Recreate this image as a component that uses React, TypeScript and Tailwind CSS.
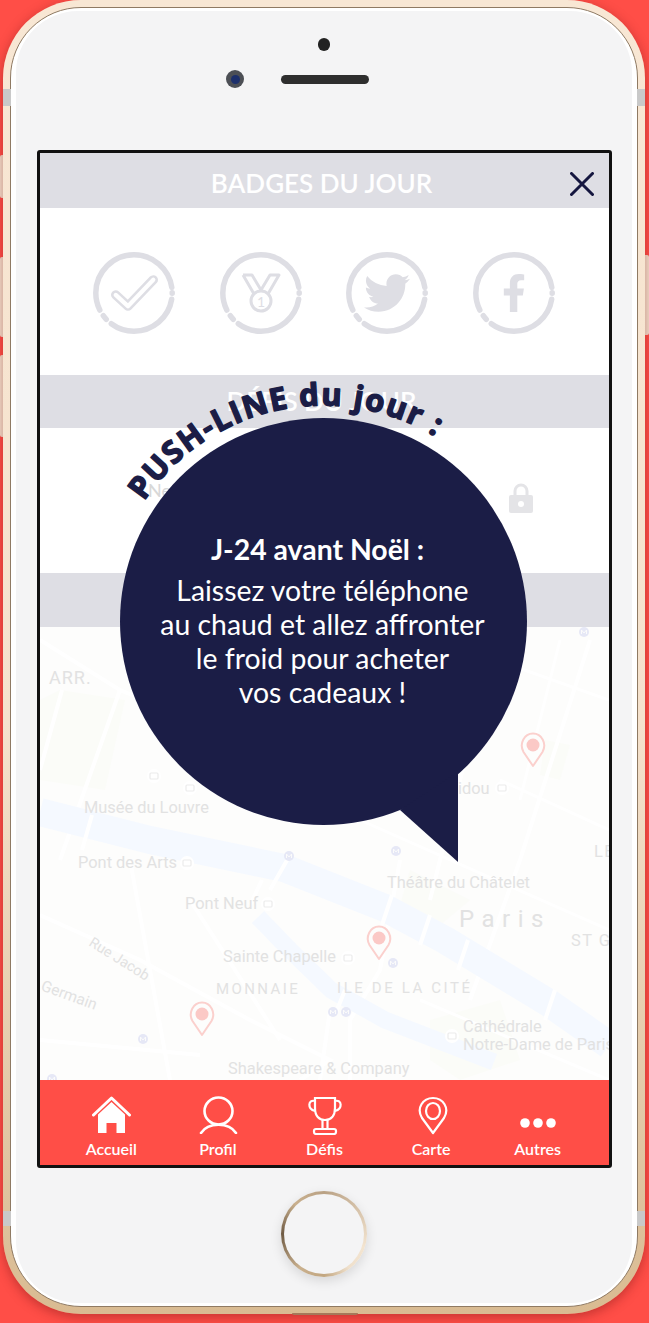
import { FaTwitter, FaFacebookF } from "react-icons/fa";

const lato = "font-['Lato',sans-serif]";

function Ring({ children }: { children: React.ReactNode }) {
  return (
    <div className="relative flex h-[82px] w-[82px] items-center justify-center">
      <svg viewBox="0 0 82 82" className="absolute inset-0 h-full w-full">
        <circle cx="41" cy="41" r="38.2" fill="none" stroke="#dedee4" strokeWidth="5.5" strokeLinecap="round" pathLength={360} strokeDasharray="1 9 117 10 7 10 198 8" strokeDashoffset="0.5" />
      </svg>
      {children}
    </div>
  );
}

function Band({ label }: { label: string }) {
  return (
    <div className={`flex h-full items-center justify-center bg-[#dedee4] pr-[6px] text-[26px] font-semibold text-white ${lato}`}>{label}</div>
  );
}

function Pin({ x, y }: { x: number; y: number }) {
  return (
    <g transform={`translate(${x} ${y})`}>
      <path d="M13 34 L3.5 20 C-1 12 4 1.5 13 1.5 C22 1.5 27 12 22.5 20 Z" fill="#fdfdfc" stroke="#fbd0cd" strokeWidth="2" strokeLinejoin="round" />
      <circle cx="13" cy="13" r="6.5" fill="#fbc9c6" />
    </g>
  );
}

function Metro({ x, y }: { x: number; y: number }) {
  return (
    <g>
      <circle cx={x} cy={y} r="5" fill="#e6e8f6" />
      <path d={`M${x - 2.5} ${y + 2} V${y - 2} L${x} ${y + 1} L${x + 2.5} ${y - 2} V${y + 2}`} fill="none" stroke="#fbfbfb" strokeWidth="1" />
    </g>
  );
}

function Spot({ x, y }: { x: number; y: number }) {
  return (
    <g>
      <circle cx={x} cy={y} r="7" fill="#ffffff" />
      <rect x={x - 4} y={y - 3} width="8" height="6" rx="1" fill="none" stroke="#ececec" strokeWidth="1.2" />
    </g>
  );
}

function MapArt() {
  const t = { fontFamily: "Roboto, sans-serif", fill: "#e2e2e2" } as const;
  return (
    <svg viewBox="40 627 569 453" className="block h-full w-full bg-[#fdfdfc]">
      <g fill="#fbfcf8">
        <path d="M60 690 L125 700 L105 790 L40 780 L40 700 Z" />
        <path d="M410 870 L470 900 L440 925 L400 905 Z" />
        <path d="M430 1020 L500 1000 L520 1060 L460 1080 L430 1060 Z" />
        <path d="M545 740 L570 745 L560 780 L540 775 Z" />
      </g>
      <g fill="none" stroke="#ffffff" strokeWidth="4">
        <path d="M40 640 L120 690 L60 860 M62 690 L40 770 M120 690 L290 760 M500 627 L480 700 L430 900 M590 640 L520 860 L470 1000" />
        <path d="M40 915 L140 960 L250 1020 L330 1060 L300 1080 M130 860 L170 1080 M190 900 L280 1040 M40 1040 L200 1055 M330 1010 L320 1080 M400 860 L380 970 L350 1020 L350 1080" />
        <path d="M440 640 L609 700 M500 780 L609 830 M560 640 L520 800 M360 820 L609 930 M420 1000 L609 1080" strokeWidth="3" />
      </g>
      <g fill="none" stroke="#f5f9ff" strokeLinejoin="round">
        <path d="M40 812 L150 840 L284 868 L385 908 L445 940 L549 1003 L609 1045" strokeWidth="28" />
        <path d="M258 917 L290 950 L331 990 L385 1020 L494 1062" strokeWidth="17" />
      </g>
      <g fill="none" stroke="#ffffff" strokeWidth="4">
        <path d="M92 815 L82 850 M290 855 L270 890 M392 895 L382 925 M430 915 L420 945 M468 940 L458 970 M555 990 L545 1020 M345 990 L335 1015 M262 880 L250 905" />
      </g>
      <Metro x={584} y={632} />
      <Metro x={289} y={856} />
      <Metro x={396} y={851} />
      <Metro x={393} y={963} />
      <Metro x={333} y={1012} />
      <Metro x={346} y={1012} />
      <Metro x={143} y={1039} />
      <Metro x={52} y={1079} />
      <Spot x={187} y={863} />
      <Spot x={268} y={904} />
      <Spot x={502} y={788} />
      <Spot x={348} y={958} />
      <Spot x={154} y={776} />
      <Spot x={190} y={788} />
      <Spot x={452} y={1036} />
      <g {...t} fontSize="16.4">
        <text x="49" y="684" fontSize="18" letterSpacing="1">ARR.</text>
        <text x="84" y="813">Musée du Louvre</text>
        <text x="78" y="868">Pont des Arts</text>
        <text x="387" y="888">Théâtre du Châtelet</text>
        <text x="185" y="909">Pont Neuf</text>
        <text x="458" y="794">idou</text>
        <text x="459" y="927" fontSize="24" letterSpacing="7.5">Paris</text>
        <text x="571" y="946" letterSpacing="1.5">ST G</text>
        <text x="594" y="857" letterSpacing="1.5">LE</text>
        <text x="223" y="962">Sainte Chapelle</text>
        <text x="216" y="994" fontSize="15" letterSpacing="2.4">MONNAIE</text>
        <text x="337" y="993" fontSize="15" letterSpacing="2.6">ILE DE LA CITÉ</text>
        <text x="88" y="945" fontSize="14.5" transform="rotate(32 88 945)">Rue Jacob</text>
        <text x="40" y="990" fontSize="15.5" transform="rotate(20 40 990)">Germain</text>
        <text x="463" y="1032">Cathédrale</text>
        <text x="463" y="1050">Notre-Dame de Paris</text>
        <text x="228" y="1074">Shakespeare &amp; Company</text>
      </g>
      <Pin x={520} y={732} />
      <Pin x={366} y={925} />
      <Pin x={189} y={1001} />
    </svg>
  );
}

function NavItem({ label, children }: { label: string; children: React.ReactNode }) {
  return (
    <div className="flex flex-col items-center pt-[15px]">
      <div className="flex h-[40px] items-center justify-center">{children}</div>
      <div className={`mt-[4px] text-[16px] font-semibold leading-[20px] text-white ${lato}`}>{label}</div>
    </div>
  );
}

export default function App() {
  return (
    <div className="relative h-[1323px] w-[649px] overflow-hidden bg-[#ff4e47]">
      <div className="absolute left-0 top-[155px] h-[43px] w-[6px] rounded-l-[2px] bg-[#f6e3d0]" />
      <div className="absolute left-0 top-[257px] h-[80px] w-[6px] rounded-l-[2px] bg-[#f6e3d0]" />
      <div className="absolute left-0 top-[355px] h-[82px] w-[6px] rounded-l-[2px] bg-[#f6e3d0]" />
      <div className="absolute right-0 top-[255px] h-[80px] w-[6px] rounded-r-[2px] bg-[#f6e3d0]" />

      <div className="relative ml-[3px] h-[1314px] w-[642px] rounded-[78px] bg-[linear-gradient(180deg,#f8e7d4_0%,#f5e2cd_55%,#d9bb92_100%)] px-[7px] py-[7px] shadow-[0_3px_12px_rgba(120,20,20,0.45)]">
        <div className="absolute left-0 top-[89px] h-[17px] w-[8px] bg-[#c9c9c9]" />
        <div className="absolute right-0 top-[89px] h-[17px] w-[8px] bg-[#c9c9c9]" />
        <div className="absolute left-0 top-[1211px] h-[15px] w-[8px] bg-[#c9c9c9]" />
        <div className="absolute right-0 top-[1211px] h-[15px] w-[8px] bg-[#c9c9c9]" />
        <div className="h-full rounded-[71px] border border-[#8f7a63] bg-white px-[5px] pb-[3px] pt-[3px]">
          <div className="flex h-full flex-col items-start rounded-[62px] bg-[#f4f4f5]">
            <div className="ml-[302px] mt-[27px] h-[13px] w-[12px] rounded-full bg-[#222222]" />
            <div className="ml-[210px] mt-[19px] flex h-[18px] items-center">
              <div className="flex h-[18px] w-[18px] items-center justify-center rounded-full bg-[#4c4f55]">
                <div className="h-[9px] w-[9px] rounded-full bg-[#1c2f6b]" />
              </div>
              <div className="ml-[37px] h-[9px] w-[88px] rounded-full bg-[#2e2e2e]" />
            </div>

            <div className="relative ml-[21px] mt-[62px] h-[1018px] w-[575px] rounded-[3px] border-[3px] border-[#111111] bg-white">
              <div className="relative h-[55px]">
                <div className={`flex h-full items-center justify-center bg-[#dedee4] pr-[6px] pt-[6px] text-[26px] font-semibold text-white ${lato}`}>BADGES DU JOUR</div>
                <svg viewBox="0 0 24 24" className="absolute right-[15px] top-[19px] h-[24px] w-[24px]">
                  <path d="M1.5 1.5 L22.5 22.5 M22.5 1.5 L1.5 22.5" stroke="#15163f" strokeWidth="3" strokeLinecap="round" />
                </svg>
              </div>

              <div className="flex h-[167px] items-center gap-[44.7px] pl-[53px] pt-[2px]">
                <Ring>
                  <svg viewBox="0 0 50 40" className="h-[38px] w-[47px]">
                    <path d="M5 22 L18 34 L45 6" fill="none" stroke="#dedee4" strokeWidth="10" strokeLinecap="round" strokeLinejoin="round" />
                    <path d="M5 22 L18 34 L45 6" fill="none" stroke="#ffffff" strokeWidth="4.5" strokeLinecap="round" strokeLinejoin="round" />
                  </svg>
                </Ring>
                <Ring>
                  <svg viewBox="0 0 40 40" className="h-[40px] w-[40px]">
                    <path d="M2 2 H11 L20 17 L29 2 H38 L27 21 M2 2 L13 21" fill="none" stroke="#dedee4" strokeWidth="3" strokeLinejoin="round" />
                    <circle cx="20" cy="28" r="10" fill="#ffffff" stroke="#dedee4" strokeWidth="3" />
                    <text x="20" y="33.5" textAnchor="middle" fontSize="14" fontFamily="Lato, sans-serif" fill="#dedee4">1</text>
                  </svg>
                </Ring>
                <Ring>
                  <FaTwitter className="h-[46px] w-[46px] text-[#dedee4]" />
                </Ring>
                <Ring>
                  <FaFacebookF className="h-[38px] w-[38px] text-[#dedee4]" />
                </Ring>
              </div>

              <div className="h-[53px]"><Band label="DÉFIS DU JOUR" /></div>

              <div className={`flex h-[145px] items-center justify-between pl-[108px] pr-[76px] text-[18px] text-[#d8d8d8] ${lato}`}>
                <span className="mb-[20px]">Ne pas utiliser</span>
                <svg viewBox="0 0 24 30" className="mb-[6px] h-[30px] w-[24px]">
                  <path d="M6 13 V8 a6 6 0 0 1 12 0 V13" fill="none" stroke="#e4e4e7" strokeWidth="3" />
                  <rect x="0" y="12" width="24" height="18" rx="2" fill="#e4e4e7" />
                  <circle cx="12" cy="21" r="3" fill="#ffffff" />
                </svg>
              </div>

              <div className="h-[54px]"><Band label="CARTE DU JOUR" /></div>
              <div className="h-[453px] overflow-hidden"><MapArt /></div>

              <div className="grid h-[85px] grid-cols-5 bg-[#ff4e47] pl-[18px] pr-[18px]">
                <NavItem label="Accueil">
                  <svg viewBox="0 0 39 38" className="h-[38px] w-[39px]">
                    <path d="M1.5 19 L19.5 2 L37.5 19" fill="none" stroke="#fff" strokeWidth="3" strokeLinecap="round" strokeLinejoin="round" />
                    <path d="M6 18.5 L19.5 6 L33 18.5 V37 H24.5 V27 H14.5 V37 H6 Z" fill="#fff" />
                  </svg>
                </NavItem>
                <NavItem label="Profil">
                  <svg viewBox="0 0 39 38" className="ml-[2px] h-[38px] w-[39px]">
                    <ellipse cx="19.5" cy="15" rx="14" ry="13.5" fill="none" stroke="#fff" strokeWidth="2.6" />
                    <path d="M2 37 C9 26 30 26 37 37" fill="none" stroke="#fff" strokeWidth="2.6" strokeLinecap="round" />
                  </svg>
                </NavItem>
                <NavItem label="Défis">
                  <svg viewBox="0 0 36 39" className="ml-[1px] h-[39px] w-[36px]">
                    <path d="M8 2 H28 V12 C28 20 24 24 18 24 C12 24 8 20 8 12 Z" fill="none" stroke="#fff" strokeWidth="2.2" />
                    <path d="M8 5 C1 3 0 13 8 15 M28 5 C35 3 36 13 28 15" fill="none" stroke="#fff" strokeWidth="2.2" />
                    <path d="M15.5 24 V33 M20.5 24 V33" stroke="#fff" strokeWidth="2.2" />
                    <rect x="7" y="33" width="22" height="5" rx="2" fill="none" stroke="#fff" strokeWidth="2.2" />
                  </svg>
                </NavItem>
                <NavItem label="Carte">
                  <svg viewBox="0 0 30 39" className="ml-[3px] h-[39px] w-[30px]">
                    <path d="M15 37 L4 22 C-2 12 5 2 15 2 C25 2 32 12 26 22 Z" fill="none" stroke="#fff" strokeWidth="2.2" strokeLinejoin="round" />
                    <ellipse cx="15" cy="15" rx="7" ry="8" fill="none" stroke="#fff" strokeWidth="2.2" />
                  </svg>
                </NavItem>
                <NavItem label="Autres">
                  <svg viewBox="0 0 36 10" className="mt-[16px] h-[10px] w-[36px]">
                    <circle cx="5" cy="5" r="4.8" fill="#fff" />
                    <circle cx="18" cy="5" r="4.8" fill="#fff" />
                    <circle cx="31" cy="5" r="4.8" fill="#fff" />
                  </svg>
                </NavItem>
              </div>

              {/* speech bubble over the page */}
              <div className={`absolute left-[80px] top-[265px] flex h-[407px] w-[407px] flex-col items-center rounded-full bg-[#1b1d46] pt-[113px] text-white ${lato}`}>
                <svg viewBox="0 0 407 407" className="absolute inset-0 h-[407px] w-[407px] overflow-visible">
                  <path d="M280 392 L338 444 L338 354 Z" fill="#1b1d46" />
                  <path id="pushline-arc" d="M0.5 129.6 A216 216 0 0 1 406.5 129.6" fill="none" />
                  <text fontFamily="'Open Sans', sans-serif" fontWeight="700" fontSize="31" letterSpacing="1.6" fill="#1b1d46" stroke="#1b1d46" strokeWidth="1.5" strokeLinejoin="round">
                    <textPath href="#pushline-arc" startOffset="52">PUSH-LINE du jour :</textPath>
                  </text>
                </svg>
                <div className="relative pr-[12px] text-[28.4px] font-bold leading-[36px]">J-24 avant Noël :</div>
                <div className="relative mt-[6px] pr-[2px] text-center text-[28.4px] leading-[34px]">
                  Laissez votre téléphone
                  <br />
                  au chaud et allez affronter
                  <br />
                  le froid pour acheter
                  <br />
                  vos cadeaux !
                </div>
              </div>
            </div>

            <div className="ml-[265px] mt-[23px] h-[86px] w-[86px] rounded-full bg-[conic-gradient(from_0deg,#b9a184,#f3e4d0_30%,#efe0cc_40%,#c2a680_50%,#c9b08e_60%,#6f5b44_75%,#c9b08e_88%,#b9a184)] p-[3px] shadow-[0_4px_12px_rgba(0,0,0,0.12)]">
              <div className="h-full w-full rounded-full bg-[#f4f4f5]" />
            </div>
          </div>
        </div>
      </div>
      <div className="absolute left-[292px] top-[1313px] h-[2px] w-[66px] rounded-b-[4px] bg-[#a5795a]" />
    </div>
  );
}
